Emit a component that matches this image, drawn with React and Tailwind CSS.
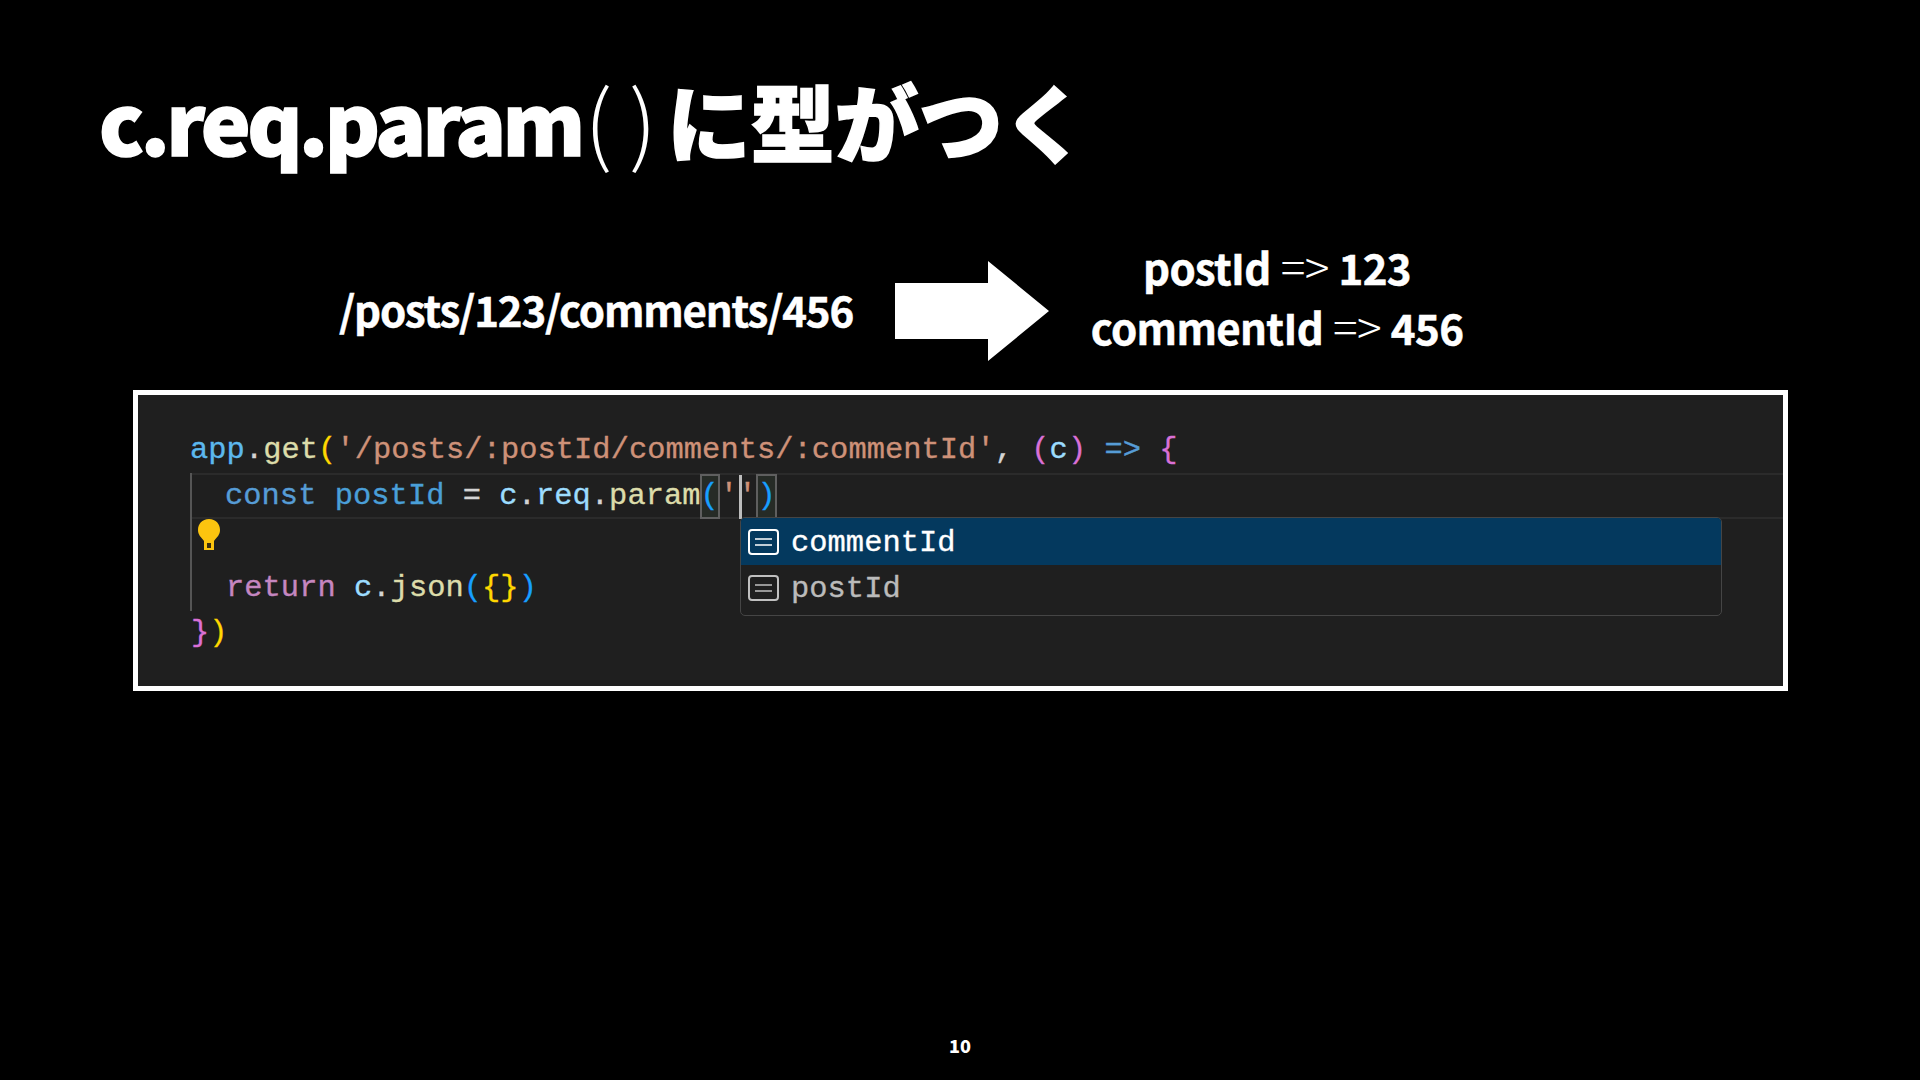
const jp = "font-['Noto_Sans_CJK_JP','Noto_Sans',sans-serif]";
const mono = "font-['Liberation_Mono',monospace]";

const Arrow = () => (
	<svg className="w-[154px] h-[100px] shrink-0" viewBox="0 0 154 100">
		<path d="M0 22H93V0L154 50L93 100V78H0Z" fill="#fff" />
	</svg>
);

const Bulb = () => (
	<svg className="w-[24px] h-[32px] ml-[5px]" viewBox="0 0 24 32">
		<path
			d="M12 0C5 0 1 5 1 11C1 16 4 18 7 22V31H17V22C20 18 23 16 23 11C23 5 19 0 12 0Z"
			fill="#fcc40f"
		/>
		<rect x="10" y="24" width="4" height="5" fill="#3a2e10" />
	</svg>
);

const KeyIcon = ({ color }) => (
	<svg className="w-[31px] h-[26px] shrink-0" viewBox="0 0 31 26" fill="none">
		<rect x="1" y="1" width="29" height="24" rx="3" stroke={color} strokeWidth="2" />
		<path d="M7 10H24M7 16H24" stroke={color} strokeWidth="1.6" />
	</svg>
);

const Match = ({ children }) => (
	<span className="inline-block border-2 border-[#5f5f5f] bg-[#262b26] h-[45px] leading-[41px] -my-px px-px">
		<span className="inline-block -mx-[2px]">{children}</span>
	</span>
);

export default function App() {
	return (
		<div className={`h-screen w-full bg-black text-white flex flex-col overflow-hidden ${jp}`}>
			{/* Title */}
			<h1 className="pl-[99px] pt-[62px] h-[190px] text-[84px] leading-[112px] font-black tracking-[-0.043em] whitespace-nowrap [-webkit-text-stroke:1.5px_white]">
				<span className="mr-[3px]">c.req.param</span>
				<span className="font-light text-[88px] tracking-[0.19em] [-webkit-text-stroke:0]">(</span>
				<span className="font-light text-[88px] tracking-normal [-webkit-text-stroke:0]">)</span>
				<span className="ml-[10px] tracking-normal">に型がつく</span>
			</h1>

			{/* Route -> params */}
			<div className="h-[200px] pt-[42px] flex items-center text-[42px] font-bold tracking-[-0.028em] leading-[60px] [-webkit-text-stroke:0.5px_white]">
				<div className="ml-[339px] mb-[5px] w-[556px] whitespace-nowrap">/posts/123/comments/456</div>
				<Arrow />
				<div className="ml-[6px] mb-[32px] w-[444px] flex flex-col items-center whitespace-nowrap tracking-[-0.015em]">
					<div className="h-[60px]">postId <span className="font-light text-[46px] mx-[1px] [-webkit-text-stroke:0]">=&gt;</span> 123</div>
					<div className="h-[60px]">commentId <span className="font-light text-[46px] mx-[1px] [-webkit-text-stroke:0]">=&gt;</span> 456</div>
				</div>
			</div>

			{/* Editor screenshot */}
			<div className={`relative ml-[133px] w-[1655px] h-[301px] border-[5px] border-white bg-[#1f1f1f] pt-[32px] pl-[52px] text-[30.4px] tracking-[0.05px] leading-[46px] whitespace-pre [-webkit-text-stroke:0.35px] ${mono}`}>
				<div className="h-[46px]">
					<span className="text-[#5cb8ee]">app</span>
					<span className="text-[#d4d4d4]">.</span>
					<span className="text-[#dcdcaa]">get</span>
					<span className="text-[#ffd700]">(</span>
					<span className="text-[#ce9178]">'/posts/:postId/comments/:commentId'</span>
					<span className="text-[#d4d4d4]">, </span>
					<span className="text-[#da70d6]">(</span>
					<span className="text-[#9cdcfe]">c</span>
					<span className="text-[#da70d6]">)</span>
					<span className="text-[#569cd6]"> =&gt; </span>
					<span className="text-[#da70d6]">{"{"}</span>
				</div>
				<div className="border-l-2 border-[#555]">
					<div className="h-[46px] border-y-2 border-[#2b2b2b] leading-[42px] pl-[33px]">
						<span className="text-[#569cd6]">const </span>
						<span className="text-[#4a9fd8]">postId</span>
						<span className="text-[#d4d4d4]"> = </span>
						<span className="text-[#9cdcfe]">c</span>
						<span className="text-[#d4d4d4]">.</span>
						<span className="text-[#9cdcfe]">req</span>
						<span className="text-[#d4d4d4]">.</span>
						<span className="text-[#dcdcaa]">param</span>
						<span className="-ml-[1px] inline-block"><Match><span className="text-[#179fff]">(</span></Match></span>
						<span className="text-[#ce9178]">'</span>
						<span className="inline-block w-[3px] h-[44px] ml-[1px] -mr-[4px] align-top bg-[#bdbdbd]" />
						<span className="text-[#ce9178]">'</span>
						<Match><span className="text-[#179fff]">)</span></Match>
					</div>
					<div className="h-[46px] flex items-start">
						<Bulb />
					</div>
					<div className="h-[46px] pl-[34px]">
						<span className="text-[#c586c0]">return </span>
						<span className="text-[#9cdcfe]">c</span>
						<span className="text-[#d4d4d4]">.</span>
						<span className="text-[#dcdcaa]">json</span>
						<span className="text-[#179fff]">(</span>
						<span className="text-[#ffd700]">{"{}"}</span>
						<span className="text-[#179fff]">)</span>
					</div>
				</div>
				<div className="h-[46px] pl-[1px] -mt-[1px]">
					<span className="text-[#da70d6]">{"}"}</span>
					<span className="text-[#ffd700]">)</span>
				</div>

				{/* Suggest widget */}
				<div className="absolute left-[602px] top-[122px] w-[982px] h-[99px] border border-[#454545] rounded-[5px] bg-[#1f1f1f] overflow-hidden">
					<div className="h-[47px] bg-[#04395e] flex items-center pl-[7px] gap-[12px] text-white">
						<KeyIcon color="#ffffff" />
						<span className="pt-[3px]">commentId</span>
					</div>
					<div className="h-[45px] flex items-center pl-[7px] gap-[12px] text-[#bbbbbb]">
						<KeyIcon color="#c0c0c0" />
						<span className="pt-[2px]">postId</span>
					</div>
				</div>
			</div>

			{/* Page number */}
			<div className="mt-auto pb-[23px] text-center text-[18px] leading-[24px] font-black">10</div>
		</div>
	);
}
